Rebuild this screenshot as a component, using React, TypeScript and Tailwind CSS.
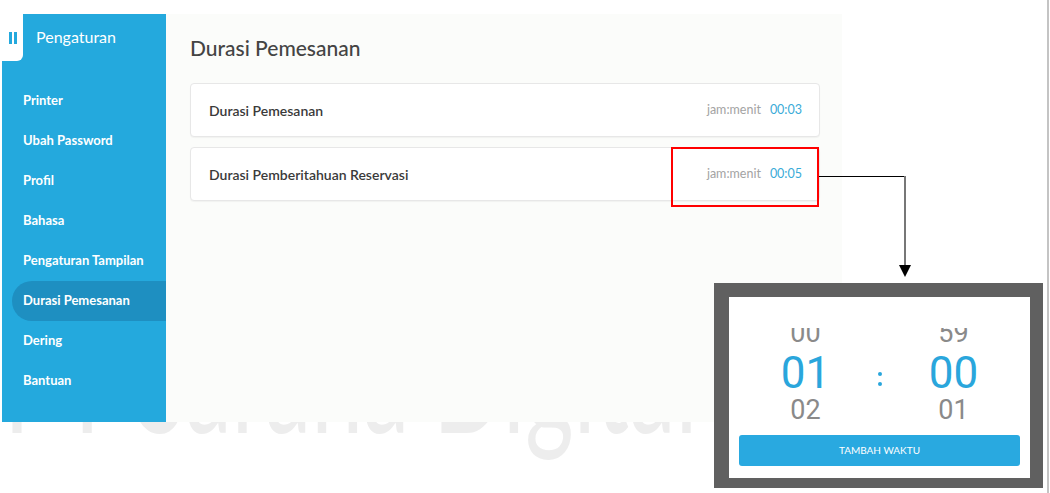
import React from "react";

const menu = [
  "Printer",
  "Ubah Password",
  "Profil",
  "Bahasa",
  "Pengaturan Tampilan",
  "Durasi Pemesanan",
  "Dering",
  "Bantuan",
];

const rows = [
  { label: "Durasi Pemesanan", value: "00:03" },
  { label: "Durasi Pemberitahuan Reservasi", value: "00:05" },
];

const Sidebar: React.FC = () => (
  <div className="w-[164px] bg-[#24a9dd] flex flex-col">
    <div className="h-[47px] flex items-center">
      <div className="w-[21px] h-[47px] bg-white rounded-br-[6px] flex items-center justify-center gap-[2px]">
        <span className="w-[3px] h-[12px] bg-[#24a9dd]" />
        <span className="w-[3px] h-[12px] bg-[#24a9dd]" />
      </div>
      <span className="ml-[13px] -mt-[2px] text-white text-[16px]">Pengaturan</span>
    </div>
    <div className="mt-[20px] flex flex-col">
      {menu.map((m) => (
        <div
          key={m}
          className={
            m === "Durasi Pemesanan"
              ? "h-[40px] ml-[10px] pl-[11px] flex items-center rounded-l-full bg-[#1e8fc1] text-white text-[13px] font-bold"
              : "h-[40px] ml-[10px] pl-[11px] flex items-center text-white text-[13px] font-bold"
          }
        >
          {m}
        </div>
      ))}
    </div>
  </div>
);

const Content: React.FC = () => (
  <div className="flex-1 bg-[#fbfcfa] pl-[24px] pr-[22px] pt-[20px]">
    <h1 className="text-[21px] leading-[28px] font-medium text-[#444]">Durasi Pemesanan</h1>
    <div className="mt-[21px] flex flex-col gap-[10px]">
      {rows.map((r) => (
        <div
          key={r.label}
          className="h-[54px] bg-white border border-[#e7e7e7] rounded-[4px] shadow-[0_1px_1px_rgba(0,0,0,0.04)] flex items-center justify-between pl-[18px] pr-[17px]"
        >
          <span className="text-[14px] font-semibold text-[#3a3a3a]">{r.label}</span>
          <span className="flex items-center gap-[9px]">
            <span className="text-[12.5px] text-[#a3a3a3]">jam:menit</span>
            <span className="text-[12.5px] text-[#3aabd8]">{r.value}</span>
          </span>
        </div>
      ))}
    </div>
  </div>
);

const Picker: React.FC = () => (
  <div className="absolute left-[714px] top-[283px] w-[329px] h-[205px] bg-[#606060] pt-[14px] pl-[15px]">
    <div className="w-[301px] h-[181px] bg-white flex flex-col" style={{ fontFamily: "Roboto, sans-serif" }}>
      <div className="mt-[31px] h-[97px] overflow-hidden grid grid-cols-[60px_88px_60px] justify-center">
        <div className="flex flex-col items-center -mt-[8px] leading-none">
          <span className="text-[27px] text-[#8a8a8a]">00</span>
          <span className="mt-[4px] text-[44px] text-[#2aa6dc]">01</span>
          <span className="mt-[2px] text-[27px] text-[#8a8a8a]">02</span>
        </div>
        <div className="flex flex-col items-center pt-[44px] gap-[6px]">
          <span className="w-[4px] h-[4px] rounded-full bg-[#2aa6dc]" />
          <span className="w-[4px] h-[4px] rounded-full bg-[#2aa6dc]" />
        </div>
        <div className="flex flex-col items-center -mt-[8px] leading-none">
          <span className="text-[27px] text-[#8a8a8a]">59</span>
          <span className="mt-[4px] text-[44px] text-[#2aa6dc]">00</span>
          <span className="mt-[2px] text-[27px] text-[#8a8a8a]">01</span>
        </div>
      </div>
      <button
        className="mx-[10px] mt-[10px] h-[31px] rounded-[3px] bg-[#29a9e0] text-white text-[10px]"
        style={{ fontFamily: "Lato, sans-serif" }}
      >
        TAMBAH WAKTU
      </button>
    </div>
  </div>
);

export default function App() {
  return (
    <div
      className="relative w-[1050px] h-[493px] bg-white overflow-hidden"
      style={{ fontFamily: "Lato, 'Open Sans', sans-serif" }}
    >
      {/* watermark, only the part below the screenshot shows */}
      <div className="absolute left-0 top-[422px] w-[714px] h-[71px] overflow-hidden">
        <div className="-mt-[122px] ml-[4px] text-[150px] leading-none text-[#ededed] scale-x-[0.62] origin-left whitespace-nowrap">
          PT Sarana Digital
        </div>
      </div>

      <div className="relative ml-[2px] mt-[14px] w-[840px] h-[408px] flex">
        <Sidebar />
        <Content />
      </div>

      {/* annotation */}
      <div className="absolute left-[671px] top-[147px] w-[148px] h-[60px] border-2 border-[#ff0000]" />
      <svg className="absolute left-0 top-0" width="1050" height="493">
        <line x1="819" y1="176.5" x2="905" y2="176.5" stroke="#000" strokeWidth="1" />
        <line x1="905" y1="176" x2="905" y2="266" stroke="#777" strokeWidth="2" />
        <polygon points="899,265 911,265 905,277" fill="#000" />
      </svg>

      <Picker />

      <div className="absolute right-[1px] top-0 w-[2px] h-full bg-[#c4c4c4]" />
    </div>
  );
}
